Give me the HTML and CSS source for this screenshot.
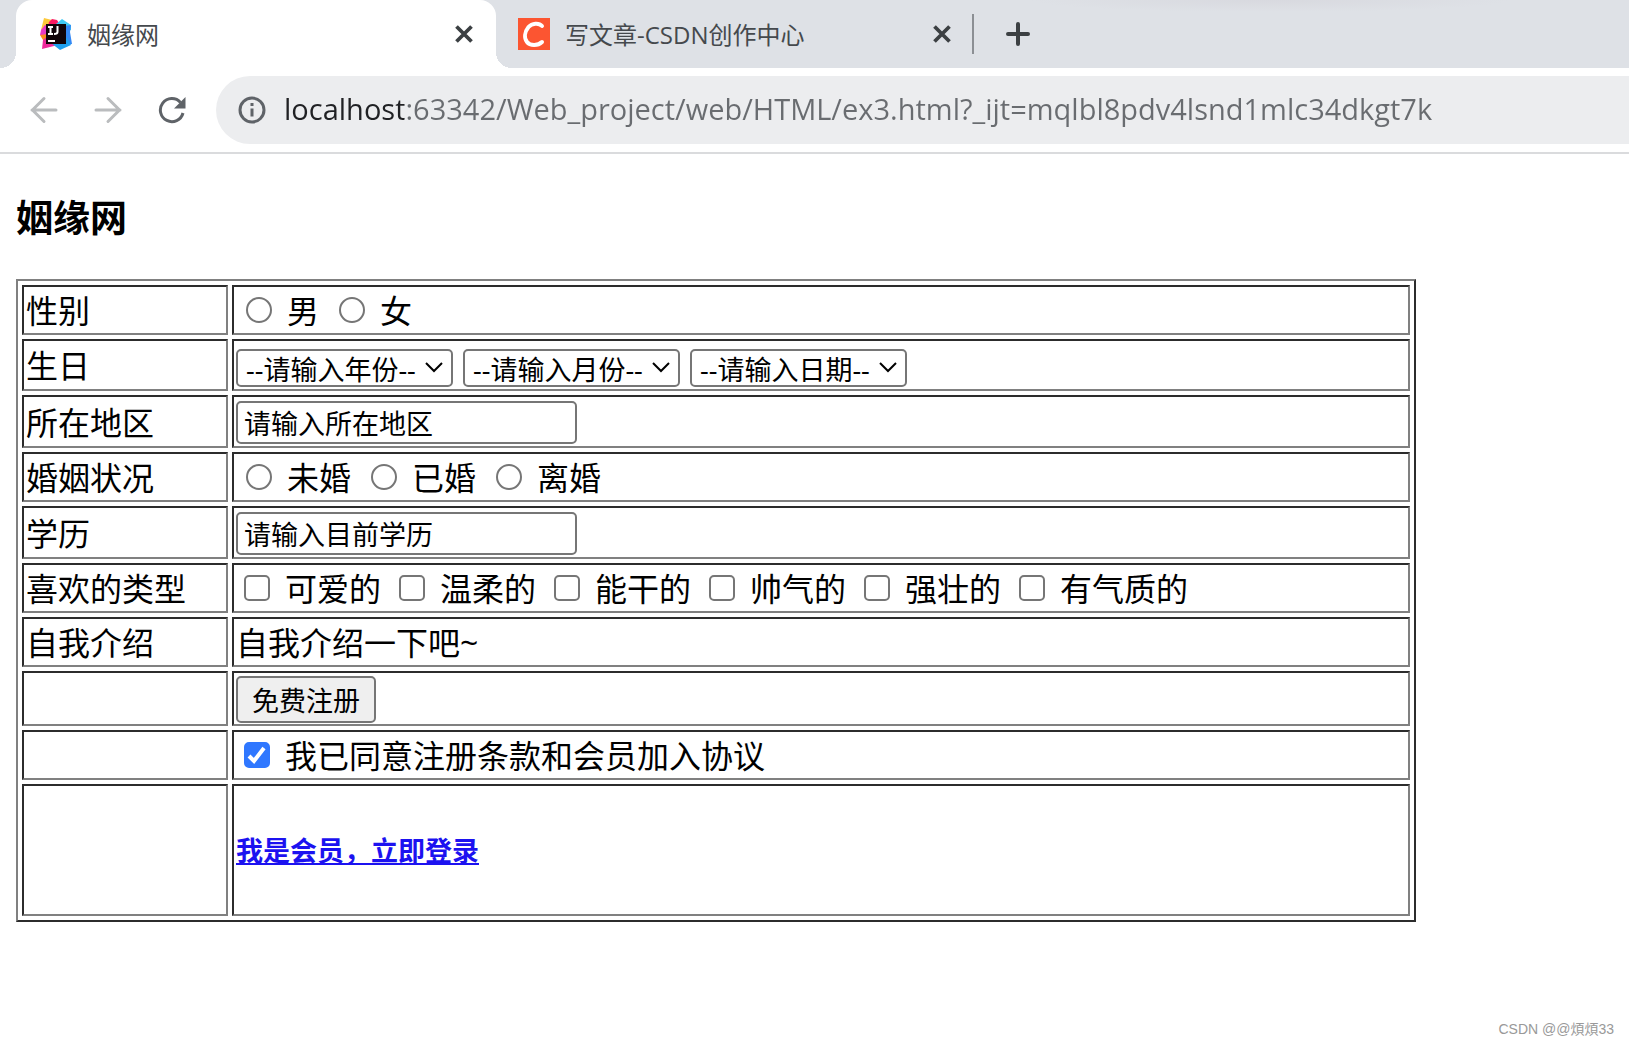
FILE: index.html
```html
<!DOCTYPE html>
<html lang="zh-CN">

<head>
    <meta charset="UTF-8">
    <meta name="viewport" content="width=device-width, initial-scale=1.0">
    <title>姻缘网</title>
    <link rel="stylesheet" href="styles.css">
</head>
<body>
    <header class="browser">
        <div class="tabs">
            <div class="tab active">
                <svg class="favicon" viewBox="0 0 32 32">
                    <polygon points="4,0 12,2 8,16 1,12" fill="#fdc93b"/>
                    <polygon points="1,12 5,7 12,10 8,18 0,17" fill="#e93ac4"/>
                    <polygon points="9,4 12,1 17,2 20,7 8,8" fill="#fb1a62"/>
                    <polygon points="0,17 8,16 8,24 3,22" fill="#fc8b1f"/>
                    <polygon points="3,22 8,18 18,26 14,28 2,31" fill="#ef2a9b"/>
                    <polygon points="16,6 22,1 31,7 31,12 24,14" fill="#3fc9f5"/>
                    <polygon points="24,8 31,7 30,14 32,26 24,27" fill="#3488f5"/>
                    <polygon points="11,25 27,20 31,27 20,32" fill="#1fa0ee"/>
                    <rect x="6" y="6" width="20" height="20" fill="#100408"/>
                    <path d="M8 9h5M10.500 9v7M8 16h5M17.500 8v6q0 2-3.500 2M8 23h7" fill="none" stroke="#fff" stroke-width="2"/>
                </svg>
                <span class="tab-title">姻缘网</span>
                <button class="close" aria-label="关闭">
                    <svg viewBox="0 0 16 16"><path d="M2 2l12 12M14 2L2 14"/></svg>
                </button>
            </div>
            <div class="tab">
                <svg class="favicon" viewBox="0 0 32 32">
                    <rect width="32" height="32" fill="#fc5531"/>
                    <path d="M24 8C21 4.500 14 5 10.500 9C6.500 14 6 20 9 24C12 28 20 28 24 24" fill="none" stroke="#fff" stroke-width="4" stroke-linecap="round"/>
                </svg>
                <span class="tab-title">写文章-CSDN创作中心</span>
                <button class="close" aria-label="关闭">
                    <svg viewBox="0 0 16 16"><path d="M2 2l12 12M14 2L2 14"/></svg>
                </button>
            </div>
            <button class="new-tab" aria-label="新标签页">
                <svg viewBox="0 0 24 24"><path d="M12 2v20M2 12h20"/></svg>
            </button>
        </div>
        <div class="toolbar">
            <button class="nav off" aria-label="后退">
                <svg viewBox="0 0 28 28"><path d="M26 14H2M14 2.500L2.500 14L14 25.500"/></svg>
            </button>
            <button class="nav off" aria-label="前进">
                <svg viewBox="0 0 28 28"><path d="M2 14h24M14 2.500L25.500 14L14 25.500"/></svg>
            </button>
            <button class="nav" aria-label="刷新">
                <svg viewBox="0 0 28 28">
                    <path d="M22.500 6.500A11.500 11.500 0 1 0 25 17"/>
                    <path class="solid" d="M27.500 1v11.500H16z"/>
                </svg>
            </button>
            <div class="omnibox">
                <svg class="info" viewBox="0 0 28 28">
                    <circle cx="14" cy="14" r="12"/>
                    <path d="M14 12.500v8M14 7v3"/>
                </svg>
                <input class="url" type="text" aria-label="地址" value="localhost:63342/Web_project/web/HTML/ex3.html?_ijt=mqlbl8pdv4lsnd1mlc34dkgt7k">
            </div>
        </div>
    </header>

    <main>
        <h3>姻缘网</h3>
        <form>
            <table>
                <tr>
                    <td class="name">性别</td>
                    <td>
                        <div class="choices">
                            <label><input type="radio" name="sex">男</label>
                            <label><input type="radio" name="sex">女</label>
                        </div>
                    </td>
                </tr>
                <tr>
                    <td class="name">生日</td>
                    <td>
                        <div class="selects">
                            <select aria-label="年份"><option>--请输入年份--</option></select>
                            <select aria-label="月份"><option>--请输入月份--</option></select>
                            <select aria-label="日期"><option>--请输入日期--</option></select>
                        </div>
                    </td>
                </tr>
                <tr>
                    <td class="name"><label for="area">所在地区</label></td>
                    <td><input class="text" type="text" id="area" value="请输入所在地区"></td>
                </tr>
                <tr>
                    <td class="name">婚姻状况</td>
                    <td>
                        <div class="choices">
                            <label><input type="radio" name="marry">未婚</label>
                            <label><input type="radio" name="marry">已婚</label>
                            <label><input type="radio" name="marry">离婚</label>
                        </div>
                    </td>
                </tr>
                <tr>
                    <td class="name"><label for="edu">学历</label></td>
                    <td><input class="text" type="text" id="edu" value="请输入目前学历"></td>
                </tr>
                <tr>
                    <td class="name">喜欢的类型</td>
                    <td>
                        <div class="choices">
                            <label><input type="checkbox" name="like">可爱的</label>
                            <label><input type="checkbox" name="like">温柔的</label>
                            <label><input type="checkbox" name="like">能干的</label>
                            <label><input type="checkbox" name="like">帅气的</label>
                            <label><input type="checkbox" name="like">强壮的</label>
                            <label><input type="checkbox" name="like">有气质的</label>
                        </div>
                    </td>
                </tr>
                <tr>
                    <td class="name">自我介绍</td>
                    <td>自我介绍一下吧~</td>
                </tr>
                <tr>
                    <td class="name"></td>
                    <td><button class="submit" type="button">免费注册</button></td>
                </tr>
                <tr>
                    <td class="name"></td>
                    <td>
                        <div class="choices">
                            <label><input type="checkbox" name="agree" checked>我已同意注册条款和会员加入协议</label>
                        </div>
                    </td>
                </tr>
                <tr>
                    <td class="name"></td>
                    <td><h5><a href="#">我是会员，立即登录</a></h5></td>
                </tr>
            </table>
        </form>
    </main>

    <footer>CSDN @@煩煩33</footer>
</body>

</html>
```
FILE: styles.css
```css
* {
    box-sizing: border-box;
}

body {
    margin: 0;
    min-height: 100vh;
    display: flex;
    flex-direction: column;
    background-color: #fff;
    color: #000;
    font-family: "Open Sans", "Noto Sans CJK SC", sans-serif;
    font-size: 32px;
    line-height: 42px;
}

button {
    padding: 0;
    border: none;
    background: none;
    cursor: pointer;
}

svg {
    display: block;
    flex-shrink: 0;
}

/* tabs */
.browser {
    border-bottom: 2px solid #dadbdd;
}

.tabs {
    display: flex;
    align-items: center;
    height: 68px;
    padding-left: 16px;
    background: radial-gradient(240px 12px at 78% 0, #d8d9df, #dee1e6);
}

.tab {
    position: relative;
    display: flex;
    align-items: center;
    width: 478px;
    height: 68px;
    padding: 0 22px;
    color: #45494d;
    font-size: 24px;
}

.tab.active {
    width: 480px;
    padding-left: 24px;
    background-color: #fff;
    border-radius: 16px 16px 0 0;
}

.tab.active::before,
.tab.active::after {
    content: "";
    position: absolute;
    bottom: 0;
    width: 16px;
    height: 16px;
}

.tab.active::before {
    left: -16px;
    background: radial-gradient(circle at 0 0, transparent 16px, #fff 16px);
}

.tab.active::after {
    right: -16px;
    background: radial-gradient(circle at 100% 0, transparent 16px, #fff 16px);
}

.tab + .tab::after {
    content: "";
    width: 2px;
    height: 40px;
    margin-left: 20px;
    margin-right: -22px;
    background-color: #8c8f94;
}

.favicon {
    width: 32px;
    height: 32px;
    margin-right: 15px;
}

.tab-title {
    flex: 1;
    padding-top: 2px;
    white-space: nowrap;
}

.close svg {
    width: 20px;
    height: 20px;
}

.close path,
.new-tab path {
    fill: none;
    stroke: #3c4043;
    stroke-width: 3;
}

.new-tab {
    margin-left: 32px;
}

.new-tab svg {
    width: 24px;
    height: 24px;
}

.new-tab path {
    stroke-width: 4;
    stroke-linecap: round;
}

/* toolbar */
.toolbar {
    display: flex;
    align-items: center;
    gap: 36px;
    padding: 8px 0 8px 30px;
}

.nav svg,
.info {
    width: 28px;
    height: 28px;
    fill: none;
    stroke: #5f6368;
    stroke-width: 3;
}

.nav.off svg {
    stroke: #babcbe;
    stroke-linecap: round;
}

.nav .solid {
    fill: #5f6368;
    stroke: none;
}

.omnibox {
    flex: 1;
    display: flex;
    align-items: center;
    gap: 18px;
    height: 68px;
    margin-left: -6px;
    padding-left: 22px;
    background-color: #ecedef;
    border-radius: 34px 0 0 34px;
}

/* the host is dark, the rest of the address is grey */
.url {
    flex: 1;
    min-width: 0;
    height: 48px;
    padding: 0 0 3px;
    border: none;
    outline: none;
    background: linear-gradient(to right, #202124 120px, #696c70 120px);
    -webkit-background-clip: text;
    background-clip: text;
    color: transparent;
    font-family: "Open Sans", sans-serif;
    font-size: 29px;
}

/* page */
main {
    padding: 0 16px;
}

h3 {
    margin: 38px 0 36px;
    font-size: 37px;
    line-height: 51px;
}

table {
    width: 100%;
    max-width: 1400px;
    border: 2px solid;
    border-color: #808080 #2c2c2c #2c2c2c #808080;
    border-spacing: 4px;
}

td {
    height: 50px;
    padding: 3px 2px 1px;
    border: 2px solid;
    border-color: #2c2c2c #808080 #808080 #2c2c2c;
}

.name {
    width: 206px;
}

.choices {
    display: flex;
    flex-wrap: wrap;
    column-gap: 10px;
}

.choices label {
    display: flex;
    align-items: center;
}

.choices input {
    appearance: none;
    width: 26px;
    height: 26px;
    margin: 0 15px 2px 8px;
    border: 2px solid #767676;
    border-radius: 5px;
    background-color: #fff;
}

.choices input[type="radio"] {
    margin-left: 10px;
    border-radius: 50%;
}

.choices input:checked {
    border-color: #2f77ff;
    background: #2f77ff url("data:image/svg+xml,%3Csvg xmlns='http://www.w3.org/2000/svg' viewBox='0 0 22 22'%3E%3Cpath d='M3 12l5 5L18 4' fill='none' stroke='white' stroke-width='4'/%3E%3C/svg%3E") center / 22px no-repeat;
}

.selects {
    display: flex;
    flex-wrap: wrap;
    gap: 10px;
    padding: 5px 0 1px;
}

select,
.text,
.submit {
    border: 2px solid #767676;
    border-radius: 5px;
    color: #000;
    font-family: inherit;
    font-size: 27px;
}

select {
    appearance: none;
    width: 217px;
    height: 38px;
    padding: 0 0 2px 8px;
    background: #fff url("data:image/svg+xml,%3Csvg xmlns='http://www.w3.org/2000/svg' viewBox='0 0 18 12'%3E%3Cpath d='M1 1l8 8 8-8' fill='none' stroke='black' stroke-width='2'/%3E%3C/svg%3E") right 8px center / 18px 12px no-repeat;
}

.text {
    display: block;
    width: 341px;
    height: 43px;
    margin: 1px 0;
    padding: 0 6px;
    background-color: #fff;
}

.submit {
    display: block;
    height: 47px;
    padding: 0 14px;
    background-color: #efefef;
}

h5 {
    margin: 44px 0;
    font-size: 27px;
    line-height: 36px;
}

h5 a {
    color: #1c12f0;
}

footer {
    margin-top: auto;
    padding: 0 15px 6px;
    color: #999;
    font-family: "Liberation Sans", "Noto Sans CJK SC", sans-serif;
    font-size: 14px;
    line-height: 22px;
    text-align: right;
}
```
